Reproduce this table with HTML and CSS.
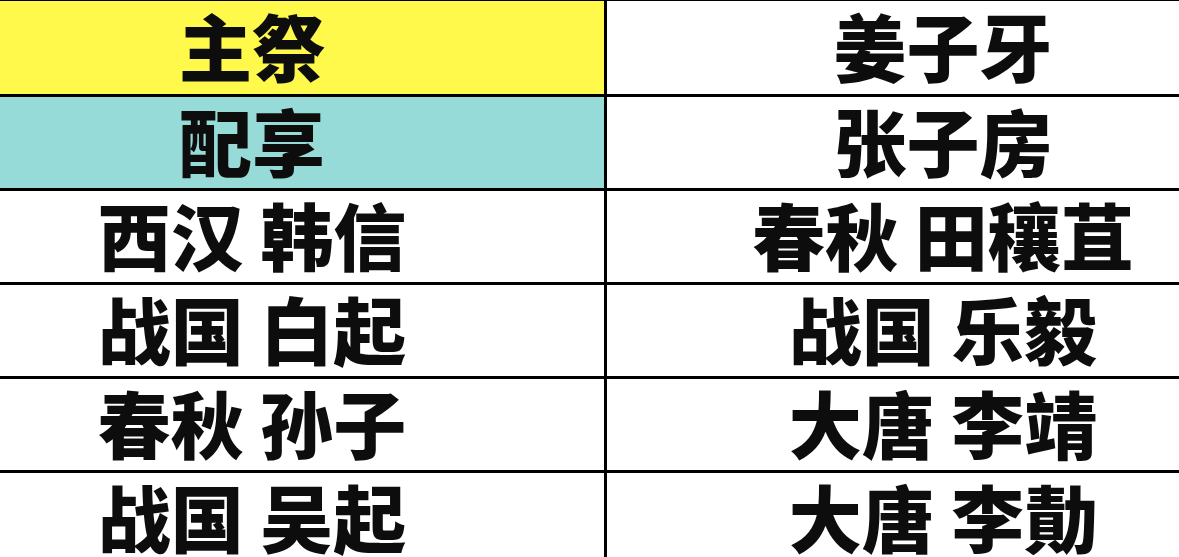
FILE: index.html
```html
<!DOCTYPE html>
<html lang="zh-CN">
<head>
<meta charset="utf-8">
<title>主祭 配享</title>
<link rel="stylesheet" href="styles.css">
</head>
<body>
<div class="table">
  <div class="cell left yellow">主祭</div>
  <div class="cell right">姜子牙</div>
  <div class="cell left teal">配享</div>
  <div class="cell right">张子房</div>
  <div class="cell left">西汉 韩信</div>
  <div class="cell right">春秋 田穰苴</div>
  <div class="cell left">战国 白起</div>
  <div class="cell right">战国 乐毅</div>
  <div class="cell left">春秋 孙子</div>
  <div class="cell right">大唐 李靖</div>
  <div class="cell left">战国 吴起</div>
  <div class="cell right">大唐 李勣</div>
</div>
</body>
</html>
```
FILE: styles.css
```css
html, body {
  margin: 0;
  padding: 0;
  background: #ffffff;
  overflow: hidden;
}

.table {
  display: grid;
  grid-template-columns: 604px 1fr;
  grid-template-rows: 93px repeat(5, 91px);
  gap: 3px;
  padding-top: 1px;
  background: #000000;
  width: 1179px;
}

.cell {
  background: #ffffff;
  display: flex;
  align-items: center;
  justify-content: center;
  padding-bottom: 7px;
  font-family: "Noto Sans CJK SC", "Noto Sans", sans-serif;
  font-weight: 900;
  font-size: 73px;
  line-height: 1;
  color: #0d0d0d;
  white-space: pre;
}

.left {
  padding-right: 100px;
}

.right {
  padding-left: 100px;
}

.yellow {
  background: #fff94c;
}

.teal {
  background: #96dbd7;
}
```
